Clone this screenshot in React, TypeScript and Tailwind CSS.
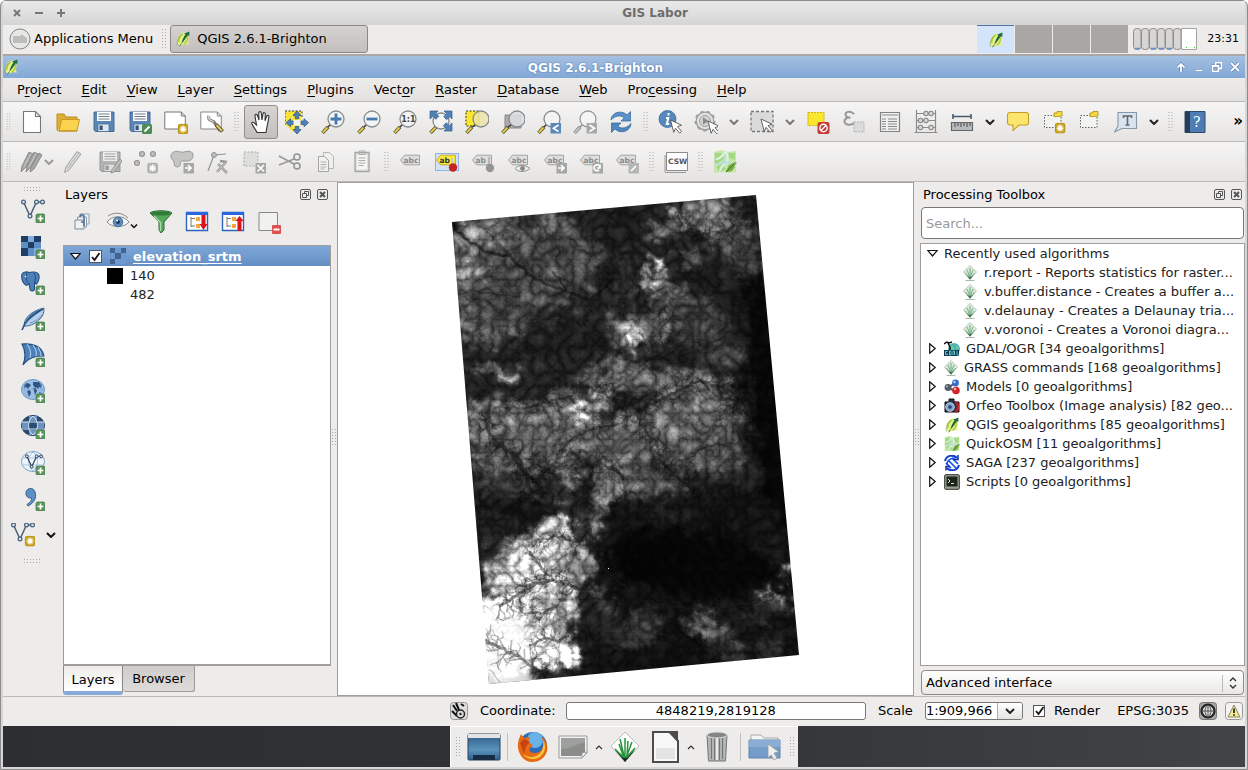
import React, { useState } from "react";
import type { ReactNode } from "react";

/* ---------- shared drawing helpers ---------- */

const Ico = ({ children, c = "size-6" }: { children: ReactNode; c?: string }) => (
  <svg viewBox="0 0 24 24" className={`${c} shrink-0`} fill="none" aria-hidden="true">
    {children}
  </svg>
);

const PlusBadge = () => (
  <g>
    <rect x="15" y="15" width="9" height="9" rx="1.5" fill="#5c945c" stroke="#3f7a43" strokeWidth=".7" />
    <path d="M19.5 16.6v5.8M16.6 19.5h5.8" stroke="#fff" strokeWidth="1.7" />
  </g>
);

const StarBadge = ({ x = 14, y = 14, mono = false }: { x?: number; y?: number; mono?: boolean }) => (
  <g transform={`translate(${x} ${y})`}>
    <rect x=".4" y=".4" width="9.4" height="9.4" rx="1.4" fill={mono ? "#b9b9b8" : "#d0a51c"} stroke={mono ? "#989898" : "#a98200"} strokeWidth=".8" />
    <path d="M5.1 1.6v7M1.6 5.1h7M2.7 2.7l4.8 4.8M7.5 2.7L2.7 7.5" stroke="#fff" strokeWidth="1.2" />
  </g>
);

const Arrow = ({ color = "#222" }: { color?: string }) => (
  <svg viewBox="0 0 10 6" className="h-[6px] w-[10px] shrink-0" fill="none" aria-hidden="true">
    <path d="M1 1l4 4 4-4" stroke={color} strokeWidth="2" />
  </svg>
);

const Grip = ({ w = "w-[13px]" }: { w?: string }) => (
  <svg viewBox="0 0 6 20" className={`h-5 shrink-0 px-[3px] ${w}`} aria-hidden="true">
    {Array.from({ length: 14 }, (_, i) => (
      <rect key={i} x={i % 2 ? 4 : 1} y={Math.floor(i / 2) * 3} width="1" height="1" fill="#aaa8a4" />
    ))}
  </svg>
);

const HGrip = () => (
  <svg viewBox="0 0 20 6" className="h-[6px] w-5 shrink-0" aria-hidden="true">
    {Array.from({ length: 12 }, (_, i) => (
      <rect key={i} x={1 + (i % 6) * 3} y={i < 6 ? 1 : 4} width="1" height="1" fill="#aaa8a4" />
    ))}
  </svg>
);

const Handle = () => (
  <div className="flex w-[6px] shrink-0 items-center justify-center">
    <svg viewBox="0 0 6 20" className="h-5 w-[6px]" aria-hidden="true">
      {Array.from({ length: 12 }, (_, i) => (
        <rect key={i} x={i % 2 ? 4 : 1} y={Math.floor(i / 2) * 3} width="1" height="1" fill="#aaa8a4" />
      ))}
    </svg>
  </div>
);

const Feather = ({ c = "size-4" }: { c?: string }) => (
  <svg viewBox="0 0 16 16" className={`${c} shrink-0`} fill="none" aria-hidden="true">
    <path d="M9 1.500C5.500 2 2.500 6 2.300 10c0 3.500 1.700 5 4 4.500l5-1.500 2 1 .5-1.500-1.300-.8C13.700 9 14 5 12.500 2.500z" fill="#e6f08a" />
    <path d="M8 3C5 4.500 3.500 8 3.800 11M12.500 5c.3 3-1 6.500-4 8.500" stroke="#b7cc3c" strokeWidth="1.500" />
    <path d="M2.500 14.500c-1-3 .5-8 4-11" stroke="#7fae45" strokeWidth=".8" />
    <path d="M14.500 .5l-.3 4.500-1.400-.8C11 7 9.500 9.500 6.300 12.800c.7-3.200 2-6.300 4.200-9.600l-1.700-.4z" fill="#1d6b3c" />
    <path d="M6.300 12.800l-1.800 2.500" stroke="#1d6b3c" strokeWidth=".9" />
  </svg>
);

/* ---------- toolbar icons ---------- */

const Floppy = ({ mono = false }: { mono?: boolean }) => (
  <>
    <path d="M2 2h20v19.500H3.500L2 20z" fill={mono ? "#b5b5b4" : "#5b87b8"} stroke={mono ? "#8f8f8f" : "#3a6290"} strokeWidth=".9" />
    <path d="M5 2h14v9H5z" fill={mono ? "#ececec" : "#fff"} />
    <path d="M6.500 4h11M6.500 6.500h11M6.500 9h11" stroke={mono ? "#a2a2a2" : "#6c7988"} />
    <path d="M6 14h11v7.500H6z" fill={mono ? "#dedede" : "#dfe7ee"} stroke={mono ? "#8f8f8f" : "#3a6290"} strokeWidth=".7" />
    <path d="M7.500 15.500h3.200v4.500H7.500z" fill={mono ? "#999" : "#33557d"} />
  </>
);

const Glass = ({ children, mono = false, x = 15, y = 9, fill = "#f4f5f5" }: { children?: ReactNode; mono?: boolean; x?: number; y?: number; fill?: string }) => (
  <>
    <path d="M1.500 23L7 17" stroke={mono ? "#8d8d8d" : "#5a5130"} strokeWidth="3.400" />
    <path d="M1.800 22.600L6.800 17.200" stroke={mono ? "#c5c5c5" : "#ead44a"} strokeWidth="1.800" />
    <path d={`M6.500 17.500l${x - 12} ${y - 12}`} stroke={mono ? "#888" : "#333"} strokeWidth="1.500" />
    <circle cx={x} cy={y} r="8" fill={fill} fillOpacity=".85" stroke={mono ? "#999" : "#858b8b"} strokeWidth="1.300" />
    {children}
  </>
);

const Cursor = ({ x, y }: { x: number; y: number }) => (
  <path transform={`translate(${x} ${y})`} d="M0 0l11 5.200-4 1.500 4.200 4.800-2 1.600-4.200-4.800-1.800 4z" fill="#fff" stroke="#555" strokeWidth=".9" />
);

const SqBadge = ({ d, fill = "#5a88b8" }: { d: string; fill?: string }) => (
  <g>
    <rect x="13.500" y="13" width="10.500" height="10.500" fill={fill} />
    <path d={d} stroke="#fff" strokeWidth="1.700" />
  </g>
);

const LabelTag = ({ children, on = false, text = "abc" }: { children?: ReactNode; on?: boolean; text?: string }) => (
  <>
    {on && <rect x=".5" y="3.500" width="23" height="17" fill="#d3e2f6" stroke="#8fb3e2" />}
    <path d="M1.500 10l4-4.800h15v9.600h-15z" fill={on ? "#f8e83b" : "#dededd"} stroke={on ? "#cda92c" : "#a4a4a3"} />
    <text x="4.500" y="13" fontSize="7.500" fontWeight="bold" fontFamily="DejaVu Sans" fill={on ? "#333" : "#8b8b8b"}>{text}</text>
    {children}
  </>
);

function Osm() {
  return (
    <>
      <path d="M1 2l7-2 7 2 8-1v21l-7 1-8-1-7 1z" fill="#c6e6ae" />
      <path d="M2 3h7l2 6-6 4H2zM15 3h7v7l-6-2zM3 17l6-3 4 5-6 3z" fill="#a3d983" />
      <path d="M3 9c5 1 6-5 9-6s3 6 2 9-6 2-7 9" stroke="#dcf2e4" strokeWidth="2" />
      <path d="M12 4v10M2 15l10-3 11 2" stroke="#bcdae4" strokeWidth="1.500" />
      <path d="M13 21l3-6 6-3 2 1-3 3 1 1-3 4-4 1z" fill="#79b045" />
      <path d="M13 22l8-8" stroke="#3f6a20" />
    </>
  );
}

const icons: Record<string, ReactNode> = {
  new: <path d="M3.500 1.500h12l5 5v16h-17zM15.500 1.500v5h5" fill="#fff" stroke="#777" strokeWidth="1.100" />,
  open: (
    <>
      <path d="M1 20V4h7l2 3h11v5" fill="#e0ae34" stroke="#b98b20" />
      <path d="M3 21L5.500 9.500H23.500L21 21z" fill="#fbd24d" stroke="#c99a25" />
      <path d="M1 20l1 1h19" stroke="#b98b20" />
    </>
  ),
  save: <Floppy />,
  saveAs: (
    <>
      <Floppy />
      <rect x="14" y="14" width="10" height="10" rx="1.500" fill="#4d8a55" />
      <path d="M16.500 21.500l5-5" stroke="#fff" strokeWidth="2" />
    </>
  ),
  composer: (
    <>
      <path d="M.8 2h16.500l4 4v13H.8zM17.300 2v4h4" fill="#fff" stroke="#777" />
      <StarBadge x={14} y={14} />
    </>
  ),
  manager: (
    <>
      <path d="M.8 2h16.500l4 4v13H.8zM17.300 2v4h4" fill="#fff" stroke="#888" />
      <path d="M9 6c-1 2 0 4 2 4.500L14 12l6 9" stroke="#777" strokeWidth="3" />
      <path d="M9 6c-1 2 0 4 2 4.500L14 12" stroke="#ddd" strokeWidth="1.300" />
      <path d="M16 14.500l6.500 7" stroke="#5d532a" strokeWidth="4" />
      <path d="M16.500 15l5.500 6" stroke="#e3c65d" strokeWidth="2" />
    </>
  ),
  hand: (
    <path d="M8 22.500c-1-3-3.500-5-5-8.500-.6-1.700 1-2.300 2-1.300L7.500 15 6 6c-.2-1.900 2-2.200 2.500-.5L10 10l-.3-7c0-1.900 2.400-1.900 2.600 0L13 10l1-6.200c.3-1.700 2.400-1.400 2.300.3L16 10.700l1.700-4.400c.7-1.500 2.600-.9 2.200.8-.8 3.600-.9 6-1.900 9.500l-1 5.900z" fill="#fff" stroke="#333" strokeWidth="1.100" />
  ),
  panSel: (
    <>
      <path d="M0 1h16v14L8 22 0 14z" fill="#fae43a" />
      <path d="M0 15V1h17v7" stroke="#333" strokeDasharray="2 1.500" />
      <path d="M12 1l4 4.500h-2.300v3.200h-3.400V5.500H8zM12 24l4-4.500h-2.300v-3h-3.400v3H8zM1 12.700l4.500-4V11h3.200v3.400H5.500v2.300zM23.500 12.700l-4.500-4V11h-3.200v3.400H19v2.300z" fill="#5182b6" stroke="#2f5d8e" strokeWidth=".8" />
      <path d="M8.500 10h7v5.500h-7z" fill="#f4f4f4" />
    </>
  ),
  zoomIn: <Glass><path d="M15 3.500v11M9.500 9h11" stroke="#4679ae" strokeWidth="2.800" /></Glass>,
  zoomOut: <Glass><path d="M9.500 9h11" stroke="#4679ae" strokeWidth="2.800" /></Glass>,
  zoomOne: (
    <Glass><text x="8.300" y="12.300" fontSize="8" fontWeight="bold" fontFamily="DejaVu Sans" fill="#444">1:1</text></Glass>
  ),
  zoomFull: (
    <Glass x={12} y={11}>
      <path d="M1 1h8L6.800 3.300l3 3-3 3-3-3L1 9zM23 1v8l-2.300-2.300-3 3-3-3 3-3L15 1zM23 21h-8l2.300-2.300-3-3 3-3 3 3L23 13z" fill="#5182b6" stroke="#315d8b" strokeWidth=".7" />
    </Glass>
  ),
  zoomSel: (
    <>
      <path d="M1 1h13v15H1z" fill="#fbe62e" stroke="#333" strokeDasharray="2 1.500" />
      <Glass fill="#ece3a8" x={16} />
    </>
  ),
  zoomLayer: (
    <>
      <path d="M4 5h16v13H4z" fill="#aaa" stroke="#888" />
      <Glass fill="#dfe0e4" x={16} />
    </>
  ),
  zoomLast: <Glass><SqBadge d="M21.500 15l-5 3.300 5 3.200" /></Glass>,
  zoomNext: <Glass mono><SqBadge fill="#a9a9a9" d="M16.500 15l5 3.300-5 3.200" /></Glass>,
  refresh: (
    <>
      <path d="M2 10C2 3 12-1 18 5l3.500-3.500V11H12l3.300-3.200C11 4.500 6 6 2 10z" fill="#5b91c9" stroke="#3e6f9f" strokeWidth=".8" />
      <path d="M22 13.500c0 7-10 11.500-16 5.500L2.500 22.500V13H12l-3.300 3.200C13 19.500 18 18 22 13.500z" fill="#4f86bf" stroke="#3e6f9f" strokeWidth=".8" />
    </>
  ),
  identify: (
    <>
      <circle cx="9.500" cy="9" r="8.500" fill="#5688bd" stroke="#3c6c9f" strokeWidth=".8" />
      <path d="M10.500 3v2.500M8 8h2.300L8.800 14h2.400" stroke="#fff" strokeWidth="2" />
      <Cursor x={12.500} y={10} />
    </>
  ),
  gear: (
    <>
      <circle cx="11" cy="11" r="8.800" fill="#e1e1e0" stroke="#999" strokeWidth="1.200" />
      <circle cx="11" cy="11" r="9.800" stroke="#999" strokeWidth="1.300" strokeDasharray="3.500 3.300" />
      <circle cx="11" cy="11" r="5.500" fill="#d0d0cf" stroke="#a2a2a2" />
      <path d="M9 7.500l5.500 3.500L9 14.500z" fill="#888" />
      <Cursor x={14} y={11} />
    </>
  ),
  select: (
    <>
      <path d="M1 1.500h22v20H1z" fill="#d9dad9" stroke="#777" strokeWidth="1.300" strokeDasharray="3 2" />
      <Cursor x={11} y={9} />
    </>
  ),
  deselect: (
    <>
      <path d="M2 2.500h16v13H2z" fill="#fbe62e" stroke="#d4b20d" strokeWidth="1.200" strokeDasharray="2 1" />
      <rect x="11.500" y="12" width="12" height="12" rx="2" fill="#c8393a" />
      <circle cx="17.500" cy="18" r="3.700" stroke="#fff" strokeWidth="1.400" />
      <path d="M15 20.500l5-5" stroke="#fff" strokeWidth="1.400" />
    </>
  ),
  expr: (
    <>
      <path d="M12 4C9 .5 3.500 1.500 3.500 4.500c0 2 2 3 5 3-4 0-6 1.500-6 4 0 3.500 6.500 4.500 10 1.200" stroke="#999" strokeWidth="2" />
      <path d="M12 12h10v10H12z" fill="#dadbdd" stroke="#b3b3b3" strokeDasharray="2 1" />
    </>
  ),
  table: (
    <>
      <path d="M2.500 2.500h19v19h-19z" fill="#efefee" stroke="#828282" strokeWidth="1.200" />
      <path d="M4 5h16M4 9h4M10 9h9M4 11.500h4M10 11.500h9M4 14h4M10 14h9M4 16.500h4M10 16.500h9M4 19h4M10 19h9" stroke="#8b8b8b" strokeWidth="1.200" />
    </>
  ),
  abacus: (
    <>
      <path d="M2.500 0v22M21.500 0v22M.5 22.500h23M3 3.500h18M3 10.500h18M3 17.500h18" stroke="#8b8b8b" strokeWidth="1.200" />
      {[[12, 3.5], [17, 3.5], [6.5, 10.5], [12, 10.5], [6.5, 17.5], [17, 17.5]].map(([x, y]) => (
        <circle key={`${x}-${y}`} cx={x} cy={y} r="2.200" fill="#d9d9d8" stroke="#868686" strokeWidth="1.100" />
      ))}
    </>
  ),
  ruler: (
    <>
      <path d="M3 6.500h18M3 4v5M21 4v5" stroke="#48596c" strokeWidth="1.600" />
      <path d="M1.500 12.500h21v8h-21z" fill="#b7bbc0" stroke="#666" strokeWidth="1.200" />
      <path d="M5 13v4M8 13v3M11 13v4M14 13v3M17 13v4M20 13v3" stroke="#444" />
    </>
  ),
  tip: <path d="M4 2.500h16a2.500 2.500 0 0 1 2.500 2.500v7.500a2.500 2.500 0 0 1-2.500 2.500H13l-6 5.500V15H4a2.500 2.500 0 0 1-2.500-2.500V5A2.500 2.500 0 0 1 4 2.500z" fill="#fbe56d" stroke="#c69e27" strokeWidth="1.100" />,
  bmNew: (
    <>
      <path d="M2.500 5.500h16.500v12H2.500z" stroke="#666" strokeDasharray="1.500 1.500" fill="#f3f3f2" />
      <path d="M12 3h3V1.500h5V6l-5 .5H12z" fill="#f9dc3b" stroke="#a68b16" strokeWidth=".8" />
      <StarBadge x={13} y={13} />
    </>
  ),
  bm: (
    <>
      <path d="M2.500 5.500h16.500v12H2.500z" stroke="#666" strokeDasharray="1.500 1.500" fill="#f3f3f2" />
      <path d="M12 3h3V1.500h5V6l-5 .5H12z" fill="#f9dc3b" stroke="#a68b16" strokeWidth=".8" />
    </>
  ),
  annot: (
    <>
      <path d="M4 2.500h18.500v16H8L.5 22 4 16z" fill="#d9e3ef" stroke="#8998a9" strokeWidth="1.100" />
      <path d="M9.500 8V6h8v2M13.500 6v9M11.500 15h4" stroke="#666" strokeWidth="1.600" />
    </>
  ),
  help: (
    <>
      <path d="M2 1.500h20v21H2z" fill="#4d7db4" stroke="#2f4a68" />
      <path d="M2 1.500h5v21H2z" fill="#283d55" />
      <text x="10" y="17" fontSize="14" fontFamily="DejaVu Serif" fill="#fff">?</text>
    </>
  ),
  pencils: (
    <>
      <path d="M9 2l4 2-8 14-4 4 1-6zM14 2l4 2-8 14-4 4 1-6zM19 3l3 2-8 14-4 3 1-5z" fill="#a7a7a6" stroke="#8c8c8b" />
      <path d="M11 4L4 17M16 4L9 17" stroke="#ccc" />
    </>
  ),
  pencil: (
    <>
      <path d="M15 1.500l4 2.500L7 20l-4.500 2.500L4 17z" fill="#dcdcdb" stroke="#a1a1a0" />
      <path d="M17 3L5.500 18.500" stroke="#b0b0af" />
    </>
  ),
  saveEdit: (
    <>
      <Floppy mono />
      <path d="M22 9l2 2-8 11-3 1 .8-3z" fill="#c3c3c2" stroke="#8c8c8b" strokeWidth=".9" />
    </>
  ),
  points: (
    <>
      {[[8, 4], [19, 4], [3, 13]].map(([x, y]) => (
        <circle key={x} cx={x} cy={y} r="2.500" fill="#bfbfbe" stroke="#929291" strokeWidth="1.100" />
      ))}
      <StarBadge x={13.5} y={13} mono />
    </>
  ),
  blob: (
    <>
      <path d="M3 2.500c4-3 7 .5 11-.5 5-1.500 9-1 9 3.500 0 5-5 6-9 5.500-3-.5-4 .5-3.500 2.500.5 3-3.500 4.500-5.500 2.500-1.500-1.500 0-3.500-2-5.500-2.500-2.500-3-6 0-8z" fill="#c5c5c4" stroke="#989897" />
      <SqBadge fill="#a7a7a6" d="M15 18h6M18 15l3 3-3 3" />
    </>
  ),
  node: (
    <>
      <path d="M2 21L8 5l12-1" stroke="#929291" strokeWidth="1.200" />
      <circle cx="8" cy="5" r="2.500" fill="#bfbfbe" stroke="#929291" />
      <path d="M12 14l9 9M20 12l-9 10M14 11l7 1" stroke="#989897" strokeWidth="2.500" />
      <path d="M12 14l9 9M20 12l-9 10" stroke="#ddd" strokeWidth=".7" />
    </>
  ),
  delSel: (
    <>
      <path d="M2 2h14v14H2z" fill="#dededd" stroke="#aaa" strokeDasharray="2 1.500" />
      <SqBadge fill="#a7a7a6" d="M15.500 15l6.500 6.500M22 15l-6.500 6.500" />
    </>
  ),
  cut: (
    <>
      <path d="M1 6l15 8M1 15l15-6" stroke="#999" strokeWidth="1.600" />
      <circle cx="19" cy="7" r="3" stroke="#929291" strokeWidth="1.500" />
      <circle cx="19" cy="16" r="3" stroke="#929291" strokeWidth="1.500" />
    </>
  ),
  copy: (
    <>
      <path d="M9.500 2.500h6l4 4v12h-10z" fill="#efefee" stroke="#b7b7b6" />
      <path d="M4.500 6.500h6l4 4v11h-10z" fill="#f1f1f0" stroke="#a5a5a4" />
      <path d="M6.500 12h6M6.500 14.500h6M6.500 17h6M6.500 19h4" stroke="#b2b2b1" />
    </>
  ),
  paste: (
    <>
      <path d="M5 2.500h14v19H5z" fill="#dededd" stroke="#a5a5a4" strokeWidth="1.300" />
      <path d="M7 5h10v14.500H7z" fill="#f5f5f4" />
      <path d="M9 1h6v3.500H9zM8.500 8h7M8.500 10.500h7M8.500 13h7M8.500 15.500h5" stroke="#acacab" />
    </>
  ),
  label: <LabelTag />,
  labelOn: <LabelTag on text="ab"><path d="M17 8v8" stroke="#ccc" strokeWidth="2" /><circle cx="18" cy="17.500" r="4.200" fill="#c32525" /></LabelTag>,
  labelPin: <LabelTag text="ab"><path d="M18 7v8" stroke="#aaa" strokeWidth="1.500" /><circle cx="19" cy="18" r="4.200" fill="#949494" /></LabelTag>,
  labelEye: <LabelTag><path d="M8 18.500c4-4 10-4 15 0-5 4-11 4-15 0z" fill="#eee" stroke="#929291" /><circle cx="15.500" cy="18.500" r="2.400" fill="#888" /></LabelTag>,
  labelMove: <LabelTag><SqBadge fill="#a7a7a6" d="M15 18h6M18 15l3 3-3 3" /></LabelTag>,
  labelRot: <LabelTag><SqBadge fill="#a7a7a6" d="M20 20a3 3 0 1 1 1-3M21 14.500V18h-3" /></LabelTag>,
  labelEdit: <LabelTag><SqBadge fill="#b5b5b4" d="M16 21l5-5" /></LabelTag>,
  csw: (
    <>
      <path d="M1 22V5" stroke="#999" />
      <path d="M2.500 2.500h21v18h-21z" fill="#fdfdfd" stroke="#8b8b8b" />
      <text x="4" y="13.500" fontSize="7.500" fontWeight="bold" fontFamily="DejaVu Sans" fill="#555">CSW</text>
      <path d="M1 22.500h21" stroke="#999" />
    </>
  ),
  osm: <Osm />,
};

/* ---------- data source icons of the left toolbar ---------- */

const VShape = ({ c = "#4b6078", y = 0 }: { c?: string; y?: number }) => (
  <g transform={`translate(0 ${y})`}>
    <path d="M2.500 3l6.500 14L15.500 3H21" stroke={c} strokeWidth="1.500" />
    {[[2.5, 3], [9, 17], [15.5, 3], [21.5, 3]].map(([x, yy]) => (
      <circle key={x} cx={x} cy={yy} r="1.900" fill="#d5e4f3" stroke={c} strokeWidth="1.200" />
    ))}
  </g>
);

const sources: { name: string; art: ReactNode }[] = [
  { name: "Add vector layer", art: <><VShape /><PlusBadge /></> },
  {
    name: "Add raster layer",
    art: (
      <>
        <path d="M0 1h20v20H0z" fill="#5f8fc4" />
        <path d="M0 1h7v6H0zM13 1h7v6h-7zM7 7h6v6H7zM0 13h7v8H0z" fill="#1f3e63" />
        <path d="M7 1h6v6H7zM13 13h7v8h-7z" fill="#83ade0" />
        <PlusBadge />
      </>
    ),
  },
  {
    name: "Add PostGIS layer",
    art: (
      <>
        <path d="M1 3c1.500-2.500 5-2.500 7-1.500C11 .5 16 .8 17.500 3c1.500 3 0 8-2 10l-2-1v6c0 2.500-4.500 2.500-4.500 0l-.8-5-2.700 1.500C2 13 0 8 1 3z" fill="#4e80b8" stroke="#234f80" strokeWidth="1.100" />
        <path d="M6 2c-1.500 4-1 8 2 11M13 2c2 3 1.500 7 .5 10" stroke="#234f80" />
        <circle cx="4.500" cy="5.500" r=".8" fill="#fff" />
        <PlusBadge />
      </>
    ),
  },
  {
    name: "Add SpatiaLite layer",
    art: (
      <>
        <path d="M3 19C3 11 10 4 23 1c0 5-1 8-4 11-4 4-9 7-14 7z" fill="#b7cfec" stroke="#426a96" />
        <path d="M4 17C5 10 12 4 22 1.500c-1 3-10 7-18 15.500z" fill="#4f7db0" />
        <path d="M1 23C4 14 11 7 22 2" stroke="#2d5078" strokeWidth="1.500" />
        <path d="M9 16c4-1 9-4 12-8" stroke="#6d93c1" />
        <PlusBadge />
      </>
    ),
  },
  {
    name: "Add MSSQL layer",
    art: (
      <>
        <path d="M1 1c10-1 20 2 22 12-8 0-15 1-21 9 3-8 3-14-1-21z" fill="#4e80b8" stroke="#234f80" strokeWidth="1.200" />
        <path d="M6 1c4 5 4 10 3 14M12 2c3 4 4 7 3 11M17 4c2 3 3 5 3 9" stroke="#a8c6e8" strokeWidth="1.200" />
        <PlusBadge />
      </>
    ),
  },
  {
    name: "Add WMS layer",
    art: (
      <>
        <ellipse cx="12" cy="10.500" rx="11.500" ry="10" fill="#9cbfe6" stroke="#6d94c2" />
        <path d="M3 6l3-2 3 1 1 2-2 1-1 2-2-2-2 1zM6 12l3-1 1 3-2 4-1-3zM12 3h6l3 3-1 3-2-1-1 2-2-2-1 1-2-3zM12 9h3l1 3-2 4-1-4zM18 13l3 1-2 2z" fill="#2f5683" />
        <path d="M1 10h22M5 3c-2 5-2 10 1 15M19 3c2 5 2 10-1 15" stroke="#7fa5d2" strokeWidth=".7" />
        <PlusBadge />
      </>
    ),
  },
  {
    name: "Add WCS layer",
    art: (
      <>
        <ellipse cx="12" cy="10.500" rx="11.500" ry="10" fill="#2a4c74" stroke="#1f3c5f" />
        <path d="M8 1h8v5H8zM1 7h6v6H1zM17 7h6v6h-6zM8 15h8v5H8z" fill="#8ab0dd" opacity=".7" />
        <path d="M1 7h22M1 14h22M12 1c-6 5-6 14 0 19 6-5 6-14 0-19" stroke="#d5e5f7" />
        <PlusBadge />
      </>
    ),
  },
  {
    name: "Add WFS layer",
    art: (
      <>
        <ellipse cx="12" cy="10.500" rx="11.500" ry="10" fill="#edf4fc" stroke="#7ba0cc" />
        <path d="M1 7h22M1 14h22M12 1c-6 5-6 14 0 19 6-5 6-14 0-19" stroke="#a7c3e4" />
        <g transform="translate(4 3) scale(.75)"><VShape c="#26384c" /></g>
        <PlusBadge />
      </>
    ),
  },
  {
    name: "Add delimited text layer",
    art: (
      <>
        <path d="M5 7a4.500 4.500 0 0 1 9-2c2 6-1 11-7 14l-1-1.500c3-2 5-4 4.500-6.500C8 11.500 5 10 5 7z" fill="#5c8fc6" stroke="#3a6492" />
        <PlusBadge />
      </>
    ),
  },
];

/* ---------- elevation raster ---------- */

/* cx, cy, rx, ry, rotation, gray level */
type Blob = [number, number, number, number, number, number];

const relief: Blob[] = [
  [500, 270, 60, 60, 0, 55], [475, 235, 30, 14, -8, 105], [470, 272, 22, 14, 20, 115],
  [500, 225, 22, 10, 10, 95], [512, 240, 22, 10, 40, 72], [560, 228, 34, 14, 45, 62],
  [545, 225, 6, 18, 30, 105], [575, 262, 44, 12, -14, 62], [568, 278, 30, 12, 20, 58],
  [520, 293, 50, 9, 14, 58], [555, 303, 30, 5, 10, 55], [475, 330, 26, 8, 26, 78],
  [505, 334, 34, 5, 18, 88], [490, 345, 24, 5, 24, 70], [463, 310, 8, 9, 0, 85],
  [500, 372, 24, 5, 8, 125], [515, 376, 6, 4, 0, 150],
  [700, 212, 30, 15, -10, 118], [662, 230, 16, 6, 20, 100], [735, 238, 18, 20, 30, 78],
  [715, 215, 16, 16, 0, 100], [692, 260, 14, 6, 10, 80], [745, 262, 14, 18, 10, 50],
  [655, 268, 5, 11, 30, 210], [654, 285, 4, 14, 0, 160], [670, 288, 14, 11, 30, 110],
  [628, 276, 4, 16, -30, 60], [618, 290, 3, 20, 0, 50], [680, 300, 24, 8, 10, 62],
  [632, 332, 18, 20, -20, 95], [634, 338, 5, 15, -30, 215], [660, 325, 20, 16, 0, 78],
  [668, 335, 4, 14, 0, 110], [695, 330, 26, 14, 20, 58], [710, 318, 16, 14, 20, 52],
  [725, 350, 22, 16, 30, 50], [640, 378, 60, 13, 6, 82], [605, 380, 26, 10, -20, 95],
  [585, 412, 28, 10, -30, 130], [584, 411, 13, 5, -35, 240], [500, 422, 36, 22, -10, 82],
  [540, 416, 46, 16, -20, 90], [474, 425, 14, 22, 0, 92], [560, 445, 56, 26, 0, 85],
  [640, 436, 60, 28, -20, 82], [685, 405, 40, 28, -30, 82], [698, 398, 4, 22, 30, 130],
  [700, 450, 36, 28, 0, 72], [722, 412, 16, 30, 0, 80], [495, 462, 22, 10, 20, 95],
  [510, 487, 40, 9, 5, 48], [568, 482, 14, 12, 20, 105], [618, 480, 18, 20, 0, 95],
  [655, 485, 30, 14, 0, 68], [600, 498, 5, 26, 8, 130], [594, 526, 9, 5, 0, 145],
  [715, 468, 22, 8, 0, 72], [675, 525, 40, 14, 20, 24], [768, 470, 10, 14, 0, 20],
  [560, 522, 15, 8, 30, 165], [548, 545, 28, 20, -30, 155], [575, 565, 22, 20, 20, 110],
  [580, 548, 12, 5, 30, 170], [518, 565, 34, 22, -30, 170], [498, 556, 18, 5, -20, 100],
  [540, 592, 34, 26, 10, 160], [548, 620, 24, 26, 0, 150], [500, 640, 26, 40, 0, 360],
  [500, 608, 24, 14, 0, 300], [535, 650, 20, 24, 10, 230], [562, 655, 12, 16, 20, 250],
  [600, 600, 22, 6, 30, 62], [640, 630, 28, 16, -30, 48], [600, 625, 26, 18, 0, 27],
  [716, 632, 34, 10, 24, 76], [704, 624, 14, 6, 10, 85], [760, 614, 30, 6, -8, 42],
  [776, 598, 14, 5, 10, 190], [788, 570, 5, 7, 0, 220], [768, 645, 18, 12, 0, 36],
  [732, 660, 8, 3, 0, 110], [760, 550, 8, 6, 40, 38], [782, 540, 5, 12, 0, 24],
];

const voids: Blob[] = [
  [770, 400, 20, 130, -6, 3], [690, 562, 80, 34, 6, 3], [640, 560, 34, 20, 10, 5],
  [700, 274, 26, 4, 18, 14], [627, 222, 12, 20, 0, 20], [712, 292, 50, 3, 20, 12],
  [520, 508, 40, 7, 6, 12], [690, 366, 40, 4, 12, 24], [550, 350, 60, 10, 0, 22],
  [608, 262, 5, 30, 8, 18], [590, 640, 10, 30, 0, 20], [745, 636, 18, 8, 20, 14],
];

const trunks: { p: [number, number][]; w: number; o: number; b: number }[] = [
  { p: [[452, 224], [470, 243], [488, 252], [510, 256], [530, 275], [548, 285], [568, 292], [590, 300], [612, 280]], w: 3, o: 0.8, b: 3 },
  { p: [[487, 232], [500, 244], [516, 262]], w: 2.5, o: 0.5, b: 3 },
  { p: [[566, 290], [560, 278], [553, 272]], w: 2, o: 0.8, b: 3 },
  { p: [[455, 295], [470, 290], [490, 293], [520, 297]], w: 1.5, o: 0.7, b: 2 },
  { p: [[588, 387], [612, 398], [640, 410], [668, 396], [700, 380], [730, 390], [745, 405]], w: 3, o: 0.8, b: 9 },
  { p: [[640, 410], [618, 424], [590, 430], [570, 440]], w: 2, o: 0.6, b: 8 },
  { p: [[490, 406], [488, 430], [500, 445], [520, 460], [528, 480], [532, 497]], w: 3.5, o: 0.8, b: 8 },
  { p: [[494, 408], [530, 408], [555, 400], [572, 396]], w: 2.5, o: 0.6, b: 8 },
  { p: [[542, 498], [538, 480], [552, 465], [566, 450]], w: 3, o: 0.75, b: 6 },
  { p: [[628, 500], [622, 475], [605, 465], [592, 455]], w: 3, o: 0.7, b: 7 },
  { p: [[582, 510], [586, 490], [582, 470], [576, 455]], w: 5, o: 0.7, b: 6 },
  { p: [[705, 500], [680, 480], [662, 462], [655, 440], [640, 425]], w: 3, o: 0.75, b: 8 },
  { p: [[735, 444], [708, 445], [690, 458], [668, 465]], w: 2, o: 0.5, b: 7 },
  { p: [[745, 398], [728, 406], [720, 420]], w: 2, o: 0.7, b: 5 },
  { p: [[755, 222], [730, 228], [705, 240], [690, 225], [676, 206]], w: 3, o: 0.7, b: 7 },
  { p: [[640, 366], [665, 350], [660, 330], [672, 316]], w: 2, o: 0.6, b: 7 },
  { p: [[720, 340], [700, 345], [680, 352]], w: 2, o: 0.7, b: 6 },
  { p: [[600, 590], [575, 588], [553, 580], [530, 585], [512, 598], [500, 606]], w: 3, o: 0.9, b: 8 },
  { p: [[553, 580], [540, 565], [530, 552]], w: 2.5, o: 0.8, b: 7 },
  { p: [[588, 545], [570, 540], [555, 535], [540, 542]], w: 2.5, o: 0.8, b: 6 },
  { p: [[565, 600], [545, 612], [525, 614]], w: 2.5, o: 0.7, b: 7 },
  { p: [[552, 675], [535, 668], [515, 655], [500, 648], [486, 640]], w: 3, o: 0.8, b: 9 },
  { p: [[568, 636], [558, 642], [545, 638], [530, 645]], w: 2.5, o: 0.8, b: 7 },
  { p: [[500, 683], [494, 674], [489, 670]], w: 1.5, o: 0.4, b: 4 },
  { p: [[676, 612], [678, 630], [700, 645]], w: 3, o: 0.8, b: 3 },
  { p: [[590, 530], [592, 548], [606, 570], [640, 600], [700, 610], [755, 602], [785, 588]], w: 4, o: 0.9, b: 3 },
];

/* Seeded generator, so that the drainage network is the same on every render. */
function rng(seed: number) {
  let s = seed;
  return () => {
    s = (s * 1664525 + 1013904223) % 4294967296;
    return s / 4294967296;
  };
}

function drainage() {
  const rand = rng(41);
  const out: { d: string; w: number; o: number }[] = [];
  const branch = (x: number, y: number, a: number, len: number, w: number, o: number, depth: number) => {
    let d = `M${x.toFixed(1)} ${y.toFixed(1)}`;
    let cx = x;
    let cy = y;
    let ang = a;
    const steps = Math.max(2, Math.round(len / 3));
    for (let i = 0; i < steps; i++) {
      ang += (rand() - 0.5) * 0.8;
      cx += Math.cos(ang) * 3;
      cy += Math.sin(ang) * 3;
      d += `L${cx.toFixed(1)} ${cy.toFixed(1)}`;
      if (depth > 0 && rand() < 0.6) branch(cx, cy, ang + (rand() < 0.5 ? -0.9 : 0.9), len * 0.5, w * 0.8, o * 0.85, depth - 1);
    }
    out.push({ d, w, o });
  };
  trunks.forEach(({ p, w, o, b }) => {
    let d = `M${p[0][0]} ${p[0][1]}`;
    for (let i = 1; i < p.length; i++) {
      const [x0, y0] = p[i - 1];
      const [x1, y1] = p[i];
      const ang = Math.atan2(y1 - y0, x1 - x0);
      const n = Math.max(2, Math.round(Math.hypot(x1 - x0, y1 - y0) / 4));
      for (let k = 1; k <= n; k++) {
        const j = k === n ? 0 : (rand() - 0.5) * 3;
        const x = x0 + ((x1 - x0) * k) / n - Math.sin(ang) * j;
        const y = y0 + ((y1 - y0) * k) / n + Math.cos(ang) * j;
        d += `L${x.toFixed(1)} ${y.toFixed(1)}`;
        if (b > 4) branch(x, y, ang + (k % 2 ? 1 : -1) * (0.7 + rand() * 0.5), b * (0.6 + rand()), w * 0.6, o * 0.65, 2);
      }
    }
    out.push({ d, w, o });
  });
  return out;
}

const network = drainage();

const gray = (v: number) => {
  const g = Math.min(255, v);
  return `rgb(${g},${g},${g})`;
};

const Blobs = ({ items }: { items: Blob[] }) => (
  <>
    {items.map(([cx, cy, rx, ry, r, v], i) => (
      <ellipse key={i} cx={cx} cy={cy} rx={rx} ry={ry} transform={`rotate(${r} ${cx} ${cy})`} fill={gray(v)} opacity=".85" />
    ))}
  </>
);

const Raster = () => (
  <svg viewBox="338 183 575 512" className="h-full w-full" role="img" aria-label="elevation_srtm">
    <defs>
      <clipPath id="extent">
        <path d="M452 222L756 195L799 655L553 678L489 684Z" />
      </clipPath>
      <filter id="terrain" x="440" y="185" width="370" height="505" filterUnits="userSpaceOnUse" colorInterpolationFilters="sRGB">
        <feTurbulence type="turbulence" baseFrequency="0.075" numOctaves="4" seed="12" result="t" />
        <feColorMatrix in="t" type="matrix" values="1 0 0 0 0 1 0 0 0 0 1 0 0 0 0 0 0 0 0 1" result="n" />
        <feTurbulence type="fractalNoise" baseFrequency="0.06" numOctaves="4" seed="3" result="f" />
        <feGaussianBlur in="SourceGraphic" stdDeviation="4" result="b" />
        <feDisplacementMap in="b" in2="f" scale="34" xChannelSelector="R" yChannelSelector="G" result="bd" />
        <feComposite in="bd" in2="n" operator="arithmetic" k1="2" k2="0.600" k3="0" k4="0" />
      </filter>
      <filter id="soft" x="440" y="185" width="370" height="505" filterUnits="userSpaceOnUse">
        <feGaussianBlur stdDeviation="5" />
      </filter>
      <filter id="fine" x="440" y="185" width="370" height="505" filterUnits="userSpaceOnUse">
        <feGaussianBlur stdDeviation="0.700" />
      </filter>
    </defs>
    <g clipPath="url(#extent)">
      <g filter="url(#terrain)">
        <path d="M430 175h390v530H430z" fill="#191919" />
        <path d="M600 505L810 480V700H570z" fill="#0e0e0e" />
        <Blobs items={relief} />
        <Blobs items={voids} />
      </g>
      <g filter="url(#soft)" fill="#fff">
        <path d="M470 612L505 604L524 625L532 645L520 664L545 690L470 695Z" opacity=".85" />
      </g>
      <g filter="url(#fine)" stroke="#101010" strokeLinecap="round" strokeLinejoin="round" fill="none">
        {network.map((n, i) => (
          <path key={i} d={n.d} strokeWidth={n.w} strokeOpacity={n.o * 0.5} />
        ))}
      </g>
      <path d="M608 568h1v1h-1z" fill="#fff" />
    </g>
  </svg>
);

/* ---------- small controls ---------- */

const ToolBtn = ({ name, label, w = "w-9" }: { name: string; label: string; w?: string }) => (
  <button type="button" aria-label={label} className={`flex h-9 shrink-0 items-center justify-center ${w}`}>
    <Ico>{icons[name]}</Ico>
  </button>
);

const Drop = ({ label, color }: { label: string; color?: string }) => (
  <button type="button" aria-label={label} className="flex h-9 w-5 shrink-0 items-center justify-center">
    <Arrow color={color} />
  </button>
);

const Check = ({ id, label, small = false }: { id: string; label: string; small?: boolean }) => (
  <span className="grid shrink-0 place-items-center">
    <input
      id={id}
      type="checkbox"
      aria-label={label}
      defaultChecked
      className={`peer col-start-1 row-start-1 appearance-none border border-[#555] bg-white ${small ? "size-3" : "size-[13px]"}`}
    />
    <svg viewBox="0 0 13 13" className="pointer-events-none invisible col-start-1 row-start-1 size-[13px] peer-checked:visible" fill="none" aria-hidden="true">
      <path d="M3 7l2.500 3L10.500 3" stroke="#111" strokeWidth="1.800" />
    </svg>
  </span>
);

const PanelButtons = ({ panel }: { panel: string }) => (
  <div className="flex gap-[6px]">
    <button type="button" aria-label={`Float ${panel}`}>
      <svg viewBox="0 0 11 11" className="size-[11px]" fill="none" stroke="#555" aria-hidden="true">
        <rect x=".5" y=".5" width="10" height="10" rx="1.500" />
        <path d="M4.500 4.500v-2h4v4h-2M2.500 4.500h4v4h-4z" />
      </svg>
    </button>
    <button type="button" aria-label={`Close ${panel}`}>
      <svg viewBox="0 0 11 11" className="size-[11px]" fill="none" stroke="#555" aria-hidden="true">
        <rect x=".5" y=".5" width="10" height="10" rx="1.500" />
        <path d="M3 3l5 5M8 3l-5 5" strokeWidth="2" />
      </svg>
    </button>
  </div>
);

const Tri = ({ open = false }: { open?: boolean }) => (
  <svg viewBox="0 0 11 11" className="size-[11px] shrink-0" fill="#fff" stroke="#111" strokeWidth="1.200" aria-hidden="true">
    {open ? <path d="M.7 2.500h9.600L5.500 8z" /> : <path d="M2.700 .7v9.600L8.200 5.500z" />}
  </svg>
);

/* ---------- provider icons ---------- */

const Grass = () => (
  <svg viewBox="0 0 16 16" className="size-4 shrink-0" fill="none" aria-hidden="true">
    <path d="M8 .5l6.500 6.500L8 14.500 1.500 7z" fill="#deebdf" stroke="#a9bfab" strokeWidth=".8" />
    <path d="M8 14V3M8 14C7 10 6 7 5 5M8 14c1-4 2-7 3-9M8 14C6 12 5 10 3.500 8M8 14c2-2 3-4 4.500-6" stroke="#6fa878" strokeWidth="1" />
    <path d="M5 10.500l3 4 3-4-3 2z" fill="#35684b" />
    <path d="M3.500 15.500h9" stroke="#aab7aa" />
  </svg>
);

const providerArt: Record<string, ReactNode> = {
  gdal: (
    <>
      <circle cx="10" cy="8" r="6" fill="#4cb3bd" />
      <path d="M6 4l3 1 1 3-3 2zM12 4l3 3-3 2z" fill="#6ecb9a" />
      <path d="M0 3l3-2 2 1 3-1M4 2l2 4v3" stroke="#111" strokeWidth="1.500" />
      <path d="M0 9h15v6H0z" fill="#163b48" />
      <path d="M3.500 10.500H1.500v3h2v-1M5.500 10v4h1.500v-4zM9 14v-4h1.500v4M13 10v4h2" stroke="#62c5d6" />
    </>
  ),
  models: (
    <>
      <path d="M4 9l7-5M4 9l8 3" stroke="#555" strokeWidth="2" />
      <circle cx="4" cy="8.500" r="3.400" fill="#555b66" />
      <circle cx="11.500" cy="4" r="3.400" fill="#2f6ad0" />
      <circle cx="12" cy="11.500" r="3.800" fill="#d3262b" />
      <circle cx="3" cy="7.500" r="1" fill="#b9bec7" />
      <circle cx="10.500" cy="3" r="1.200" fill="#bcd4fa" />
      <circle cx="11" cy="10" r="1.200" fill="#f9b7b7" />
    </>
  ),
  orfeo: (
    <>
      <path d="M1 4h4V1h5v3h5v10H1z" fill="#27324a" stroke="#111" />
      <circle cx="6" cy="9" r="4.300" fill="#7da3cf" stroke="#e2e6ee" strokeWidth=".8" />
      <circle cx="6" cy="9" r="1.800" fill="#26436d" />
      <path d="M11 4c4 1 4 8 0 10" stroke="#b52327" strokeWidth="2.500" />
    </>
  ),
  osm: <g transform="scale(.667)"><Osm /></g>,
  saga: (
    <>
      <path d="M1 6a7 7 0 0 1 12-3M15 10a7 7 0 0 1-12 3" stroke="#1240c8" strokeWidth="2" />
      <path d="M2 8l5 5M4 5l8 8M8 3l6 6" stroke="#1552e8" strokeWidth="1.700" />
      <path d="M14 0v4.500H9M2 15.500v-4h4" stroke="#0c2fa0" strokeWidth="1.500" />
      <path d="M3 10C3 5 7 3 11 3" stroke="#1552e8" strokeWidth="1.500" />
    </>
  ),
  scripts: (
    <>
      <rect x=".7" y=".7" width="14.600" height="14.600" rx="1" fill="#9aa193" stroke="#30332c" />
      <path d="M2.500 2.500h11v10h-11z" fill="#1c2419" />
      <path d="M4 5l2 2-2 2M7 9.500h3" stroke="#cfe6b8" />
    </>
  ),
};

const ProviderIcon = ({ k }: { k: string }) => {
  if (k === "grass") return <Grass />;
  if (k === "qgis") return <Feather />;
  return <svg viewBox="0 0 16 16" className="size-4 shrink-0" fill="none" aria-hidden="true">{providerArt[k]}</svg>;
};

/* ---------- data ---------- */

const menus: [string, string, string][] = [
  ["P", "r", "oject"], ["", "E", "dit"], ["", "V", "iew"], ["", "L", "ayer"], ["", "S", "ettings"], ["", "P", "lugins"],
  ["Vect", "o", "r"], ["", "R", "aster"], ["", "D", "atabase"], ["", "W", "eb"], ["Pro", "c", "essing"], ["", "H", "elp"],
];

const recent = [
  "r.report - Reports statistics for raster...",
  "v.buffer.distance - Creates a buffer a...",
  "v.delaunay - Creates a Delaunay tria...",
  "v.voronoi - Creates a Voronoi diagra...",
];

const providers: [string, string][] = [
  ["gdal", "GDAL/OGR [34 geoalgorithms]"],
  ["grass", "GRASS commands [168 geoalgorithms]"],
  ["models", "Models [0 geoalgorithms]"],
  ["orfeo", "Orfeo Toolbox (Image analysis) [82 geo..."],
  ["qgis", "QGIS geoalgorithms [85 geoalgorithms]"],
  ["osm", "QuickOSM [11 geoalgorithms]"],
  ["saga", "SAGA [237 geoalgorithms]"],
  ["scripts", "Scripts [0 geoalgorithms]"],
];

/* ---------- page sections ---------- */

const HostTitle = () => (
  <header className="flex h-6 shrink-0 items-center bg-linear-to-b from-[#e9e9e9] to-[#d5d5d5] pl-[10px] text-[#6d6d6d]">
    <div className="flex w-[52px] items-center gap-[14px]">
      {["M1 1l6 6M7 1L1 7", "M0 4h8", "M4 0v8M0 4h8"].map((d, i) => (
        <button key={d} type="button" aria-label={["Close", "Minimize", "Maximize"][i]}>
          <svg viewBox="0 0 8 8" className="size-2" aria-hidden="true"><path d={d} stroke="#777" strokeWidth="2" /></svg>
        </button>
      ))}
    </div>
    <h1 className="flex-1 text-center text-xs font-bold">GIS Labor</h1>
  </header>
);

const Taskbar = () => (
  <div className="flex h-[31px] shrink-0 items-center border-b-2 border-[#aaa8a6] bg-[#edeceb] pb-px">
    <button type="button" className="flex items-center gap-[3px] pl-[6px] text-[13px]">
      <svg viewBox="0 0 22 22" className="size-[22px]" fill="none" aria-hidden="true">
        <circle cx="11" cy="11" r="10" fill="#e7e7e6" stroke="#858585" />
        <path d="M4 8h8V6l6 4v5H4z" fill="#bdbdbc" />
      </svg>
      Applications Menu
    </button>
    <div className="ml-[5px] flex"><Grip w="w-3" /></div>
    <button type="button" className="flex h-7 w-[198px] items-center gap-[6px] rounded-[3px] border border-[#8d8883] bg-linear-to-b from-[#d5d3d2] to-[#c2bfbc] pl-1 text-[13px]">
      <Feather />
      QGIS 2.6.1-Brighton
    </button>
    <div className="ml-auto flex h-7 gap-px">
      <button type="button" aria-label="Workspace 1" className="flex w-[37px] items-center justify-center border-t border-t-[#4a78ae] bg-[#d4e4fa]"><Feather /></button>
      {[2, 3, 4].map((n) => <button key={n} type="button" aria-label={`Workspace ${n}`} className="w-[37px] bg-[#aaa6a3]" />)}
    </div>
    <svg viewBox="0 0 64 22" className="ml-[5px] h-[22px] w-16" aria-hidden="true">
      {[0, 1, 2, 3, 4, 5].map((i) => (
        <g key={i}>
          <rect x={i * 8 + 0.5} y=".5" width="7.500" height="21" rx="3" fill="#d8d6d4" stroke="#8f8d8a" />
          {i !== 1 && i !== 5 && <path d={`M${i * 8 + 2} 20.500h5`} stroke="#5f96df" strokeWidth="1.500" />}
        </g>
      ))}
      <path d="M48.500 .5h15v21h-15z" fill="#fff" stroke="#a5a3a0" />
      <path d="M53 19h1v1h-1zM61 19h1v1h-1z" fill="#1de01d" />
    </svg>
    <time className="pr-[6px] pl-[10px] text-[11px]">23:31</time>
  </div>
);

const QgisTitle = () => (
  <div className="flex h-[22px] shrink-0 items-center bg-linear-to-b from-[#a4c0e2] to-[#82a7d6] pr-[5px] text-white">
    <Feather />
    <h2 className="flex-1 pt-px text-center text-xs font-bold text-shadow-[0_0_2px_#48699a]">QGIS 2.6.1-Brighton</h2>
    <div className="flex items-center gap-2 pl-1">
      {[
        ["Shade", "M5 10V2M1.500 5.500L5 2l3.500 3.500"],
        ["Minimize", "M1.500 8.500h7"],
        ["Restore", "M3.500 3.500v-3h6v6h-3M.5 4h6v5.500h-6z"],
        ["Close", "M1 1l8 8M9 1L1 9"],
      ].map(([n, d]) => (
        <button key={n} type="button" aria-label={n}>
          <svg viewBox="0 0 10 10" className="size-[10px]" fill="none" aria-hidden="true">
            <path d={d} stroke="#4d73a8" strokeWidth="3" />
            <path d={d} stroke="#fff" strokeWidth="1.800" />
          </svg>
        </button>
      ))}
    </div>
  </div>
);

const toolbarCls = "flex h-10 shrink-0 items-center border-b border-[#bcbab8] bg-linear-to-b from-[#f6f5f5] to-[#e5e4e2]";

const MainToolbar = () => (
  <div role="toolbar" aria-label="Main" className={toolbarCls}>
    <Grip w="w-[11px]" />
    <ToolBtn name="new" label="New" />
    <ToolBtn name="open" label="Open" />
    <ToolBtn name="save" label="Save" />
    <ToolBtn name="saveAs" label="Save as" />
    <ToolBtn name="composer" label="New print composer" />
    <ToolBtn name="manager" label="Composer manager" />
    <Grip />
    <button type="button" aria-label="Pan map" aria-pressed="true" className="mx-px flex h-[34px] w-[34px] shrink-0 items-center justify-center rounded-[3px] border border-[#918d89] bg-linear-to-b from-[#d7d5d4] to-[#c2bfbd]">
      <Ico>{icons.hand}</Ico>
    </button>
    <ToolBtn name="panSel" label="Pan to selection" />
    <ToolBtn name="zoomIn" label="Zoom in" />
    <ToolBtn name="zoomOut" label="Zoom out" />
    <ToolBtn name="zoomOne" label="Zoom to native resolution" />
    <ToolBtn name="zoomFull" label="Zoom full" />
    <ToolBtn name="zoomSel" label="Zoom to selection" />
    <ToolBtn name="zoomLayer" label="Zoom to layer" />
    <ToolBtn name="zoomLast" label="Zoom last" />
    <ToolBtn name="zoomNext" label="Zoom next" />
    <ToolBtn name="refresh" label="Refresh" />
    <Grip />
    <ToolBtn name="identify" label="Identify features" />
    <ToolBtn name="gear" label="Run feature action" />
    <Drop label="Feature actions" color="#777" />
    <ToolBtn name="select" label="Select features" />
    <Drop label="Selection modes" color="#777" />
    <ToolBtn name="deselect" label="Deselect all" />
    <ToolBtn name="expr" label="Select by expression" />
    <ToolBtn name="table" label="Open attribute table" />
    <ToolBtn name="abacus" label="Field calculator" />
    <ToolBtn name="ruler" label="Measure" />
    <Drop label="Measure modes" />
    <ToolBtn name="tip" label="Map tips" />
    <ToolBtn name="bmNew" label="New bookmark" />
    <ToolBtn name="bm" label="Show bookmarks" />
    <ToolBtn name="annot" label="Text annotation" />
    <Drop label="Annotations" />
    <Grip />
    <ToolBtn name="help" label="Help contents" />
    <button type="button" aria-label="More tools" className="ml-auto pr-[2px] text-[15px] font-bold">»</button>
  </div>
);

const EditToolbar = () => (
  <div role="toolbar" aria-label="Digitizing" className={toolbarCls}>
    <Grip w="w-[11px]" />
    <button type="button" aria-label="Current edits" className="flex w-[42px] shrink-0 items-center pl-[6px]">
      <Ico>{icons.pencils}</Ico>
      <Arrow color="#999" />
    </button>
    <ToolBtn name="pencil" label="Toggle editing" />
    <ToolBtn name="saveEdit" label="Save layer edits" />
    <ToolBtn name="points" label="Add feature" />
    <ToolBtn name="blob" label="Move feature" />
    <ToolBtn name="node" label="Node tool" />
    <ToolBtn name="delSel" label="Delete selected" />
    <ToolBtn name="cut" label="Cut features" />
    <ToolBtn name="copy" label="Copy features" />
    <ToolBtn name="paste" label="Paste features" />
    <Grip />
    <ToolBtn name="label" label="Layer labeling" />
    <ToolBtn name="labelOn" label="Highlight pinned labels" />
    <ToolBtn name="labelPin" label="Pin labels" />
    <ToolBtn name="labelEye" label="Show or hide labels" />
    <ToolBtn name="labelMove" label="Move label" />
    <ToolBtn name="labelRot" label="Rotate label" />
    <ToolBtn name="labelEdit" label="Change label" />
    <Grip />
    <ToolBtn name="csw" label="Metasearch" />
    <Grip />
    <ToolBtn name="osm" label="QuickOSM" />
  </div>
);

const SourceToolbar = () => (
  <div role="toolbar" aria-label="Manage layers" className="flex w-[60px] shrink-0 flex-col items-center pt-[3px]">
    <div className="flex h-[8px] items-center"><HGrip /></div>
    {sources.map((s) => (
      <button key={s.name} type="button" aria-label={s.name} className="flex h-9 w-9 items-center justify-center">
        <Ico>{s.art}</Ico>
      </button>
    ))}
    <div className="flex h-9 w-[60px] items-center">
      <button type="button" aria-label="New shapefile layer" className="pl-2"><Ico><VShape y={-1} /><StarBadge x={14} y={13} /></Ico></button>
      <button type="button" aria-label="New layer types" className="ml-auto pr-[7px]"><Arrow color="#111" /></button>
    </div>
    <div className="flex h-4 items-center"><HGrip /></div>
  </div>
);

const Collapse = ({ up = false }: { up?: boolean }) => (
  <Ico>
    <path d="M1.500 2.500h21v18h-21z" fill="#fdfdfd" stroke="#2d64bd" strokeWidth="1.400" />
    <path d="M1.500 2h21v3h-21z" fill="#2a67dc" />
    <path d="M6 7v10M6 8.500h4M6 16h4" stroke="#777" />
    <path d="M11 7h4v4h-4zM11 14h4v4h-4z" fill="#f0a93a" />
    {up ? <path d="M18.500 6l4 5h-2v10h-4V11h-2z" fill="#dd1216" /> : <path d="M16.500 5h4v9h2l-4 6-4-6h2z" fill="#dd1216" />}
  </Ico>
);

const LayersPanel = () => {
  const [open, setOpen] = useState(true);
  return (
    <section aria-label="Layers" className="flex w-[268px] shrink-0 flex-col">
      <div className="flex h-6 items-center justify-between pt-px pr-[3px] pl-[2px]">
        <h3 className="text-[13px]">Layers</h3>
        <PanelButtons panel="Layers" />
      </div>
      <div className="flex h-[39px] items-center pb-[7px] pl-px">
        <button type="button" aria-label="Add group" className="flex w-9 justify-center">
          <Ico>
            <path d="M10 4h9v10h-9z" fill="#f2f2f1" stroke="#8fa0b0" /><path d="M7.500 7h9v10h-9z" fill="#f2f2f1" stroke="#8b9aa9" /><path d="M5 10h9v9H5z" fill="#f0f0ef" stroke="#7b8b9b" />
            <path d="M14 16V7c0-3-4-3-4 0M14 12h-3" stroke="#4b6f99" strokeWidth="1.500" />
          </Ico>
        </button>
        <button type="button" aria-label="Manage layer visibility" className="flex w-[43px] items-center justify-center">
          <Ico>
            <path d="M1 12c5-7 17-7 22 0-5 6-17 6-22 0z" fill="#f5f6f7" stroke="#888" /><circle cx="12" cy="12" r="4.800" fill="#5d8bc0" stroke="#476f9e" /><circle cx="12" cy="12" r="2" fill="#223c5c" /><circle cx="11" cy="10.500" r="1" fill="#fff" />
            <path d="M2 6c6-4 14-4 20 2" stroke="#888" />
          </Ico>
          <svg viewBox="0 0 8 5" className="mt-2 h-[5px] w-2" fill="none" aria-hidden="true"><path d="M1 .5l3 3 3-3" stroke="#111" strokeWidth="1.500" /></svg>
        </button>
        <button type="button" aria-label="Filter legend" className="flex w-9 justify-center">
          <Ico>
            <path d="M1 3c3-3 19-3 22 0l-8 9v8l-3 3-2-3v-8z" fill="#54a65a" stroke="#2b6f33" /><ellipse cx="12" cy="3.500" rx="10" ry="2" fill="#2f7c39" /><path d="M11.500 12v9M5 6l7 7" stroke="#aadbab" strokeWidth="1.500" />
          </Ico>
        </button>
        <button type="button" aria-label="Expand all" className="flex w-9 justify-center"><Collapse /></button>
        <button type="button" aria-label="Collapse all" className="flex w-9 justify-center"><Collapse up /></button>
        <button type="button" aria-label="Remove layer" className="flex w-9 justify-center">
          <Ico><path d="M2 2.500h18.500v18H2z" fill="#f1f1f0" stroke="#888" /><rect x="15" y="15" width="9" height="9" rx="1" fill="#de5151" /><path d="M16.500 19.500h6" stroke="#fff" strokeWidth="2" /></Ico>
        </button>
      </div>
      <div className="flex-1 border border-b-2 border-[#a09d9a] bg-white">
        <div className="flex h-5 items-center bg-linear-to-b from-[#7fa7d9] to-[#648ec3] pl-[6px]">
          <button type="button" aria-label="Toggle legend" aria-expanded={open} onClick={() => setOpen(!open)}><Tri open={open} /></button>
          <span className="flex pl-2"><Check id="layer-visible" label="elevation_srtm visible" /></span>
          <svg viewBox="0 0 16 16" className="ml-2 size-4" aria-hidden="true">
            <path d="M0 0h16v16H0z" fill="#6d98d0" />
            <path d="M0 0h5v5H0zM11 0h5v5h-5zM5 5h6v6H5zM0 11h5v5H0z" fill="#41658f" />
          </svg>
          <label htmlFor="layer-visible" className="pt-px pl-[7px] text-[13px] leading-5 font-bold text-white underline underline-offset-2">elevation_srtm</label>
        </div>
        {open && (
          <ul className="text-[13px] leading-[19px] text-[#222]">
            <li className="flex h-[19px] items-center gap-[7px] pl-[43px]"><span className="size-4 bg-black" />140</li>
            <li className="flex h-[19px] items-center gap-[7px] pl-[43px]"><span className="size-4 bg-white" />482</li>
          </ul>
        )}
      </div>
      <div role="tablist" className="flex h-[30px] items-start text-[13px]">
        <button type="button" role="tab" aria-selected="true" className="h-[29px] w-[60px] rounded-b-[3px] border border-t-0 border-b-4 border-[#8d8883] border-b-[#86abdb] bg-linear-to-b from-[#edeceb] to-white pt-[3px]">Layers</button>
        <button type="button" role="tab" aria-selected="false" className="h-[26px] w-[72px] rounded-b-[3px] border border-t-0 border-l-0 border-[#9d9996] bg-linear-to-b from-[#cfcdcb] to-[#dddbd9] pt-px">Browser</button>
      </div>
    </section>
  );
};

const Toolbox = () => (
  <section aria-label="Processing Toolbox" className="flex w-[325px] shrink-0 flex-col">
    <div className="flex h-6 items-center justify-between pt-px pr-[3px] pl-[3px]">
      <h3 className="text-[13px]">Processing Toolbox</h3>
      <PanelButtons panel="Processing Toolbox" />
    </div>
    <input type="search" aria-label="Search algorithms" placeholder="Search..." className="mx-px mt-px h-8 rounded-[4px] border border-[#777] bg-white px-1 text-[13px] placeholder:text-[#999]" />
    <div className="mt-1 flex-1 border border-[#a09d9a] bg-white text-[13px] leading-[19px] text-[#222]">
      <ul>
        <li>
          <div className="flex h-[19px] items-center gap-[6px] pl-[6px]">
            <button type="button" aria-label="Collapse recent" className="flex"><Tri open /></button>
            Recently used algorithms
          </div>
          <ul>
            {recent.map((r) => (
              <li key={r} className="flex h-[19px] items-center gap-[6px] overflow-hidden pl-[41px] whitespace-nowrap"><Grass />{r}</li>
            ))}
          </ul>
        </li>
        {providers.map(([k, t]) => (
          <li key={k} className={`flex h-[19px] items-center overflow-hidden pl-[6px] whitespace-nowrap ${k === "grass" ? "gap-[5px]" : "gap-[6px]"}`}>
            <button type="button" aria-label={`Expand ${t}`} className="flex"><Tri /></button>
            <ProviderIcon k={k} />
            {t}
          </li>
        ))}
      </ul>
    </div>
    <div className="mx-px mt-1 mb-px grid h-[25px] shrink-0">
      <select aria-label="Interface mode" className="col-start-1 row-start-1 appearance-none rounded-[4px] border border-[#8d8984] bg-linear-to-b from-white to-[#e9e8e6] px-1 text-[13px]">
        <option>Advanced interface</option>
      </select>
      <svg viewBox="0 0 22 20" className="pointer-events-none col-start-1 row-start-1 h-5 w-[22px] self-center justify-self-end" fill="none" aria-hidden="true">
        <path d="M.5 2v17" stroke="#bbb" />
        <path d="M8 8l3-3 3 3M8 12l3 3 3-3" stroke="#333" strokeWidth="1.400" />
      </svg>
    </div>
  </section>
);

const StatusBar = () => (
  <footer className="flex h-[30px] shrink-0 items-center border-t border-[#bcbab8] bg-[#edeceb] pr-[2px] pb-[2px] pl-[447px] text-[13px]">
    <button type="button" aria-label="Toggle extents" className="shrink-0">
      <svg viewBox="0 0 18 18" className="size-[18px]" fill="none" aria-hidden="true">
        <rect x=".5" y=".5" width="17" height="17" rx="3" fill="#dedddb" stroke="#999" />
        <path d="M3 3l4 6M6 1l3 7M2 9l5 5M11 2l3 2" stroke="#111" strokeWidth="2" />
        <circle cx="10.500" cy="12" r="4" fill="#ddd" stroke="#222" strokeWidth="1.500" />
        <circle cx="10.500" cy="12" r="1.200" fill="#222" />
      </svg>
    </button>
    <label htmlFor="coord" className="pl-3">Coordinate:</label>
    <input id="coord" defaultValue="4848219,2819128" className="ml-[10px] h-[18px] min-w-0 flex-1 rounded-[3px] border border-[#777] bg-white text-center text-[13px]" />
    <label htmlFor="scale" className="pl-3">Scale</label>
    <div className="ml-3 flex h-[18px] w-[98px] shrink-0 overflow-hidden rounded-[3px] border border-[#777] bg-white">
      <input id="scale" defaultValue="1:909,966" className="w-[72px] min-w-0 border-r border-[#aaa] text-[13px]" />
      <button type="button" aria-label="Scale list" className="flex flex-1 items-center justify-center bg-linear-to-b from-white to-[#e5e4e2]"><Arrow /></button>
    </div>
    <span className="flex pl-[10px]"><Check id="render" label="Render" small /></span>
    <label htmlFor="render" className="pl-2">Render</label>
    <span className="pl-[17px]">EPSG:3035</span>
    <button type="button" aria-label="CRS status" className="ml-[10px] shrink-0">
      <svg viewBox="0 0 18 18" className="size-[18px]" fill="none" aria-hidden="true">
        <rect x=".5" y=".5" width="17" height="17" rx="3" fill="#a9a8a6" stroke="#777" />
        <circle cx="9" cy="9" r="6.500" fill="#ddd" stroke="#222" strokeWidth="2.200" />
        <path d="M3 9h12M9 3v12M9 3c-4 3-4 9 0 12 4-3 4-9 0-12" stroke="#555" />
      </svg>
    </button>
    <button type="button" aria-label="Messages" className="ml-2 shrink-0">
      <svg viewBox="0 0 18 18" className="size-[18px]" fill="none" aria-hidden="true">
        <rect x=".5" y=".5" width="17" height="17" rx="3" fill="#f4f3f2" stroke="#999" />
        <path d="M9 3l6 12H3z" fill="#f3ea93" stroke="#8b8760" />
        <path d="M9 6.500v4.500M9 12.200v1.600" stroke="#222" strokeWidth="1.700" />
      </svg>
    </button>
  </footer>
);

const Caret = () => (
  <svg viewBox="0 0 8 5" className="h-[5px] w-2 shrink-0" fill="none" aria-hidden="true"><path d="M1 4l3-3 3 3" stroke="#333" strokeWidth="1.200" /></svg>
);

const Dock = () => (
  <div className="flex h-[41px] shrink-0 bg-linear-to-r from-[#2c2e31] via-[#303235] to-[#414346] pl-[447px]">
    <nav aria-label="Dock" className="flex w-[348px] items-center border-t border-l border-white bg-[#edeceb] pl-px">
      <Grip w="w-3" />
      <button type="button" aria-label="Show desktop" className="ml-[3px]">
        <svg viewBox="0 0 34 28" className="h-7 w-[34px]" aria-hidden="true">
          <defs><linearGradient id="desk" x2="0" y2="1"><stop stopColor="#2d5a88" /><stop offset=".6" stopColor="#5a93bc" /><stop offset="1" stopColor="#31618d" /></linearGradient></defs>
          <rect x="1" y="1" width="32" height="26" rx="1" fill="url(#desk)" stroke="#24405d" />
          <path d="M1 1h32v4H1z" fill="#e3e3e3" /><path d="M6 22h22v5H6z" fill="#172b42" />
        </svg>
      </button>
      <span className="ml-[6px] h-7 w-px bg-[#c3c1bf]" />
      <button type="button" aria-label="Web browser" className="ml-2">
        <svg viewBox="0 0 34 34" className="h-[34px] w-[34px]" aria-hidden="true">
          <circle cx="17" cy="16" r="14" fill="#2e6ab4" /><circle cx="19" cy="10" r="8" fill="#69b2e6" />
          <path d="M3 9l2-5 3 4 6-1-2 5 5 3-3 3c-2 2 1 5 5 5 6 0 9-5 8-11l-1-5c5 4 6 10 5 14-2 8-9 11-15 11C6 32-1 20 3 9z" fill="#e66a14" />
          <path d="M27 10c4 6 2 13-3 17-6 4-14 2-17-3 5 4 12 4 16 0 4-3 5-9 4-14z" fill="#f9c23a" /><path d="M4 13l4-4 6 3-4 4-2 8z" fill="#c7430f" />
        </svg>
      </button>
      <button type="button" aria-label="Terminal" className="ml-2">
        <svg viewBox="0 0 30 24" className="h-6 w-[30px]" aria-hidden="true">
          <path d="M1 1h28v17l-5 5H1z" fill="#f2f2f2" stroke="#999" /><path d="M3 3h24v14l-4 4H3z" fill="#8b8d8b" /><path d="M3 14c8 0 14-4 24-7V3H3z" fill="#9da09d" /><path d="M29 17l-5 6v-5z" fill="#fff" stroke="#888" strokeWidth=".7" />
        </svg>
      </button>
      <span className="ml-[7px]"><Caret /></span>
      <button type="button" aria-label="GRASS GIS" className="ml-[7px]">
        <svg viewBox="0 0 30 34" className="h-[34px] w-[30px]" fill="none" aria-hidden="true">
          <path d="M15 2l14 14-14 16L1 16z" fill="#fff" stroke="#bbb" />
          <path d="M5 20l10 12 10-12-10 7z" fill="#182b18" />
          <path d="M14 28L9 14M15 28V8M16 28l6-16M13 27L5 19M17 27l8-9M14 26l-4-17M17 25l1-14" stroke="#27953c" strokeWidth="1.500" />
        </svg>
      </button>
      <button type="button" aria-label="LibreOffice" className="ml-[11px]">
        <svg viewBox="0 0 28 34" className="h-[34px] w-7" aria-hidden="true">
          <path d="M2 2h17l8 9v21H2z" fill="#f8f8f8" stroke="#4c4c4c" strokeWidth="2" /><path d="M18 1h9v10h-1l-8-8z" fill="#4c4c4c" /><path d="M5 18h19v11H5z" fill="#e4e4e4" />
        </svg>
      </button>
      <span className="ml-2"><Caret /></span>
      <button type="button" aria-label="Trash" className="ml-[11px]">
        <svg viewBox="0 0 22 32" className="h-8 w-[22px]" fill="none" aria-hidden="true">
          <path d="M1 4h20l-1.500 26h-17z" fill="#b2b4b3" stroke="#777" /><path d="M5.500 7v21M8.500 7v22M13.500 7v22M16.500 7v21" stroke="#747674" /><path d="M11 7v22" stroke="#e9e9e9" strokeWidth="2" /><ellipse cx="11" cy="4" rx="10" ry="3" fill="#858786" stroke="#ddd" />
        </svg>
      </button>
      <span className="ml-3 h-7 w-px bg-[#c3c1bf]" />
      <button type="button" aria-label="Files" className="ml-2">
        <svg viewBox="0 0 34 28" className="h-7 w-[34px]" aria-hidden="true">
          <path d="M3 8V2h10l3 3h14v5z" fill="#f4f4f4" stroke="#aaa" /><path d="M1 7h31v18H1z" fill="#769cc9" stroke="#5a82b0" /><path d="M1 7h31v7H1z" fill="#8badd4" />
          <path d="M20 11l11 8-5 1 3 5-3 2-3-5-3 3z" fill="#eee" stroke="#999" strokeWidth=".8" />
        </svg>
      </button>
      <div className="ml-1 flex"><Grip w="w-3" /></div>
    </nav>
  </div>
);

export default function App() {
  return (
    <div className="flex min-h-screen flex-col rounded-t-[6px] border border-[#8c8c8c] bg-[#d6d6d6] px-[2px] pb-[2px] font-['DejaVu_Sans',sans-serif] text-black">
      <HostTitle />
      <Taskbar />
      <QgisTitle />
      <nav aria-label="Menu bar" className="flex h-6 shrink-0 items-center border-b border-[#bcbab8] bg-linear-to-b from-[#edeceb] to-[#e3e2e0] pl-1 text-[13px]">
        {menus.map(([a, b, c]) => (
          <button key={a + b + c} type="button" className="px-[10px]">
            {a}<span className="underline underline-offset-2">{b}</span>{c}
          </button>
        ))}
      </nav>
      <MainToolbar />
      <EditToolbar />
      <main className="flex flex-1 bg-[#edeceb]">
        <SourceToolbar />
        <LayersPanel />
        <Handle />
        <section aria-label="Map canvas" className="flex min-w-0 flex-1 border border-[#a09d9a] bg-white">
          <Raster />
        </section>
        <Handle />
        <Toolbox />
      </main>
      <StatusBar />
      <Dock />
    </div>
  );
}
